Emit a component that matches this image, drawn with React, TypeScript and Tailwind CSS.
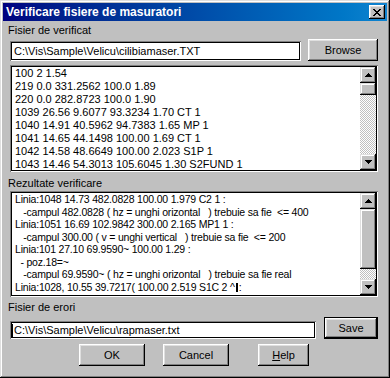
import React from "react";

const raised =
  "shadow-[inset_-1px_-1px_#000,inset_1px_1px_#fff,inset_-2px_-2px_#808080,inset_2px_2px_#dfdfdf]";
const sbRaised =
  "shadow-[inset_-1px_-1px_#000,inset_1px_1px_#dfdfdf,inset_-2px_-2px_#808080,inset_2px_2px_#fff]";
const sunken =
  "shadow-[inset_1px_1px_#808080,inset_-1px_-1px_#fff,inset_0_0_0_2px_#000]";

function Arrow({ dir }: { dir: "up" | "down" }) {
  const rows = [
    [3, 1],
    [2, 3],
    [1, 5],
    [0, 7],
  ];
  const r = dir === "up" ? rows : [...rows].reverse();
  return (
    <svg width="7" height="4" viewBox="0 0 7 4" shapeRendering="crispEdges">
      {r.map(([x, w], i) => (
        <rect key={i} x={x} y={i} width={w} height={1} fill="#000" />
      ))}
    </svg>
  );
}

function CloseGlyph() {
  const rows = [
    [
      [0, 2],
      [6, 2],
    ],
    [
      [1, 2],
      [5, 2],
    ],
    [[2, 4]],
    [[3, 2]],
    [[2, 4]],
    [
      [1, 2],
      [5, 2],
    ],
    [
      [0, 2],
      [6, 2],
    ],
  ];
  return (
    <svg width="8" height="7" viewBox="0 0 8 7" shapeRendering="crispEdges">
      {rows.map((segs, y) =>
        segs.map(([x, w], j) => (
          <rect key={`${y}-${j}`} x={x} y={y} width={w} height={1} fill="#000" />
        ))
      )}
    </svg>
  );
}

function ScrollBar({ thumbH }: { thumbH: number }) {
  return (
    <div className="w-[16px] flex flex-col shrink-0">
      <div className={`h-[16px] bg-[#c0c0c0] ${sbRaised} flex items-center justify-center`}>
        <Arrow dir="up" />
      </div>
      <div className={`bg-[#c0c0c0] ${sbRaised}`} style={{ height: thumbH }} />
      <div className="flex-1 bg-[image:repeating-conic-gradient(#c0c0c0_0%_25%,#ffffff_0%_50%)] bg-[length:2px_2px]" />
      <div className={`h-[16px] bg-[#c0c0c0] ${sbRaised} flex items-center justify-center`}>
        <Arrow dir="down" />
      </div>
    </div>
  );
}

function Button({
  children,
  className = "",
  isDefault = false,
}: {
  children: React.ReactNode;
  className?: string;
  isDefault?: boolean;
}) {
  if (isDefault) {
    return (
      <div className={`border border-black bg-[#c0c0c0] flex ${className}`}>
        <div className={`flex-1 ${raised} flex items-center justify-center text-[11px] leading-none text-black`}>
          {children}
        </div>
      </div>
    );
  }
  return (
    <div
      className={`bg-[#c0c0c0] ${raised} flex items-center justify-center text-[11px] leading-none text-black ${className}`}
    >
      {children}
    </div>
  );
}

const list1 = [
  "100 2 1.54",
  "219 0.0 331.2562 100.0 1.89",
  "220 0.0 282.8723 100.0 1.90",
  "1039 26.56 9.6077 93.3234 1.70 CT 1",
  "1040 14.91 40.5962 94.7383 1.65 MP 1",
  "1041 14.65 44.1498 100.00 1.69 CT 1",
  "1042 14.58 48.6649 100.00 2.023 S1P 1",
  "1043 14.46 54.3013 105.6045 1.30 S2FUND 1",
];

const list2: React.ReactNode[] = [
  "Linia:1048 14.73 482.0828 100.00 1.979 C2 1 :",
  "   -campul 482.0828 ( hz = unghi orizontal   ) trebuie sa fie  <= 400",
  "Linia:1051 16.69 102.9842 300.00 2.165 MP1 1 :",
  "   -campul 300.00 ( v = unghi vertical   ) trebuie sa fie  <= 200",
  "Linia:101 27.10 69.9590~ 100.00 1.29 :",
  "  - poz.18=~",
  "   -campul 69.9590~ ( hz = unghi orizontal   ) trebuie sa fie real",
  <>
    Linia:1028, 10.55 39.7217( 100.00 2.519 S1C 2 ^
    <span className="inline-block w-[2px] h-[9px] bg-black align-[-1px] mx-[1px]" />:
  </>,
];

export default function App() {
  return (
    <div
      className="w-[390px] h-[378px] bg-[#c0c0c0] p-[3px] flex flex-col shadow-[inset_-1px_-1px_#000,inset_1px_1px_#dfdfdf,inset_-2px_-2px_#808080,inset_2px_2px_#fff] font-['Liberation_Sans',Arial,sans-serif] text-black overflow-hidden"
    >
      {/* Title bar */}
      <div className="h-[18px] flex items-center bg-gradient-to-r from-[#000080] to-[#1084d0] pl-[3px] pr-[2px] shrink-0">
        <span className="text-white font-bold text-[12px] leading-none">
          Verificare fisiere de masuratori
        </span>
        <div className={`ml-auto w-[16px] h-[14px] bg-[#c0c0c0] ${raised} flex items-center justify-center`}>
          <CloseGlyph />
        </div>
      </div>

      <div className="ml-[7px] w-[368px] flex flex-col">
        <div className="mt-[3px] -ml-[2px] h-[13px] text-[11px] leading-[13px]">Fisier de verificat</div>

        <div className="mt-[2px] h-[22px] flex items-end justify-between">
          <div className={`w-[291px] h-[20px] bg-white ${sunken} flex items-center pl-[4px] text-[11px] leading-none whitespace-pre`}>
            C:\Vis\Sample\Velicu\cilibiamaser.TXT
          </div>
          <Button className="w-[70px] h-[22px]">Browse</Button>
        </div>

        <div className={`mt-[4px] h-[107px] bg-white ${sunken} p-[2px] flex`}>
          <div className="flex-1 overflow-hidden pl-[3px] text-[11px] leading-[13px] whitespace-pre">
            {list1.map((l, i) => (
              <div key={i} className="h-[13px]">
                {l}
              </div>
            ))}
          </div>
          <ScrollBar thumbH={12} />
        </div>

        <div className="mt-[5px] -ml-[2px] h-[13px] text-[11px] leading-[13px]">Rezultate verificare</div>

        <div className={`mt-[1px] h-[106px] bg-white ${sunken} p-[2px] flex`}>
          <div className="flex-1 overflow-hidden pl-[3px] text-[10.5px] tracking-[-0.2px] leading-[12.5px] whitespace-pre">
            {list2.map((l, i) => (
              <div key={i} className="h-[12.5px]">
                {l}
              </div>
            ))}
          </div>
          <ScrollBar thumbH={60} />
        </div>

        <div className="mt-[4px] -ml-[2px] h-[13px] text-[11px] leading-[13px]">Fisier de erori</div>

        <div className="mt-[3px] h-[22px] flex items-end justify-between">
          <div className={`w-[306px] h-[18px] bg-white ${sunken} flex items-center pl-[2px] text-[11px] leading-none whitespace-pre`}>
            <span className="w-[1px] h-[13px] bg-black mr-[1px]" />
            C:\Vis\Sample\Velicu\rapmaser.txt
          </div>
          <Button isDefault className="w-[54px] h-[22px]">
            Save
          </Button>
        </div>

        <div className="mt-[5px] h-[22px] flex">
          <Button className="ml-[69px] w-[66px] h-[22px]">OK</Button>
          <Button className="ml-[18px] w-[66px] h-[22px]">Cancel</Button>
          <Button className="ml-[29px] w-[51px] h-[22px]">
            <span className="underline">H</span>elp
          </Button>
        </div>
      </div>
    </div>
  );
}
